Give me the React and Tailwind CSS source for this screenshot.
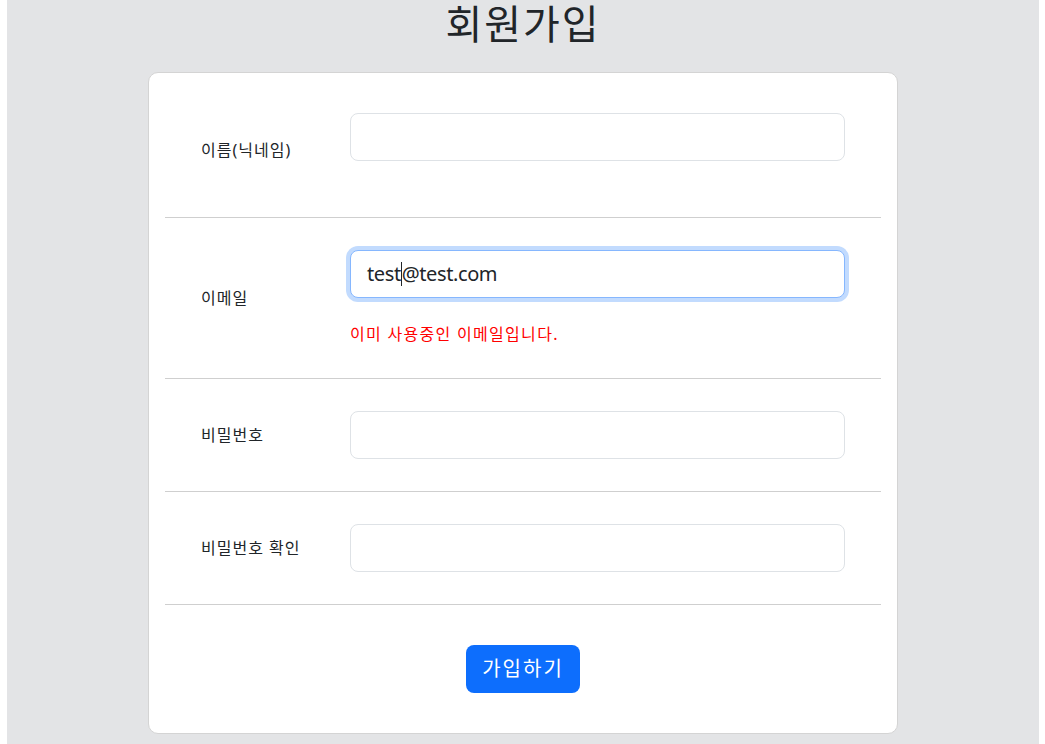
export default function App() {
  const font = { fontFamily: '"Noto Sans", "Noto Sans CJK KR", sans-serif' };
  const Row = ({ label, children, className = "" }) => (
    <div className={`flex items-center px-9 border-b border-[#cfcfcf] ${className}`}>
      <div className="w-[149px] shrink-0 text-[16px] leading-[24px] tracking-[1px] text-[#212529]">{label}</div>
      <div className="flex-1 flex flex-col">{children}</div>
    </div>
  );
  const Input = () => (
    <div className="h-[48px] w-full rounded-[8px] border border-[#dee2e6] bg-white"></div>
  );
  return (
    <div className="bg-white min-h-screen" style={font}>
      <div className="ml-[7px] mr-[6px] bg-[#e3e4e6] min-h-screen pb-[11px]">
        <h1 className="pt-0 text-center text-[40px] leading-[48px] font-normal tracking-[2px] text-[#212529]">회원가입</h1>
        <div className="mt-[24px] mx-auto w-[750px] bg-white border border-[#d4d4d4] rounded-[10px] px-4">
          <Row label="이름(닉네임)" className="pt-[40px] pb-[30px]">
            <Input />
            <div className="h-[26px]"></div>
          </Row>
          <Row label="이메일" className="py-8">
            <div className="h-[48px] w-full rounded-[8px] border border-[#86b7fe] bg-white shadow-[0_0_0_4px_rgba(13,110,253,0.25)] flex items-center px-4 text-[20px] tracking-[-0.4px] text-[#212529]">
              <span>test</span>
              <span className="inline-block w-[1px] h-[24px] bg-[#212529]"></span>
              <span>@test.com</span>
            </div>
            <div className="mt-6 text-[16px] leading-[24px] tracking-[1.3px] text-[red]">이미 사용중인 이메일입니다.</div>
          </Row>
          <Row label="비밀번호" className="py-8">
            <Input />
          </Row>
          <Row label="비밀번호 확인" className="py-8">
            <Input />
          </Row>
          <div className="flex justify-center py-10">
            <button className="h-[48px] px-4 rounded-[8px] bg-[#0d6efd] text-white text-[20px] leading-[30px] tracking-[2px]">가입하기</button>
          </div>
        </div>
      </div>
    </div>
  );
}
